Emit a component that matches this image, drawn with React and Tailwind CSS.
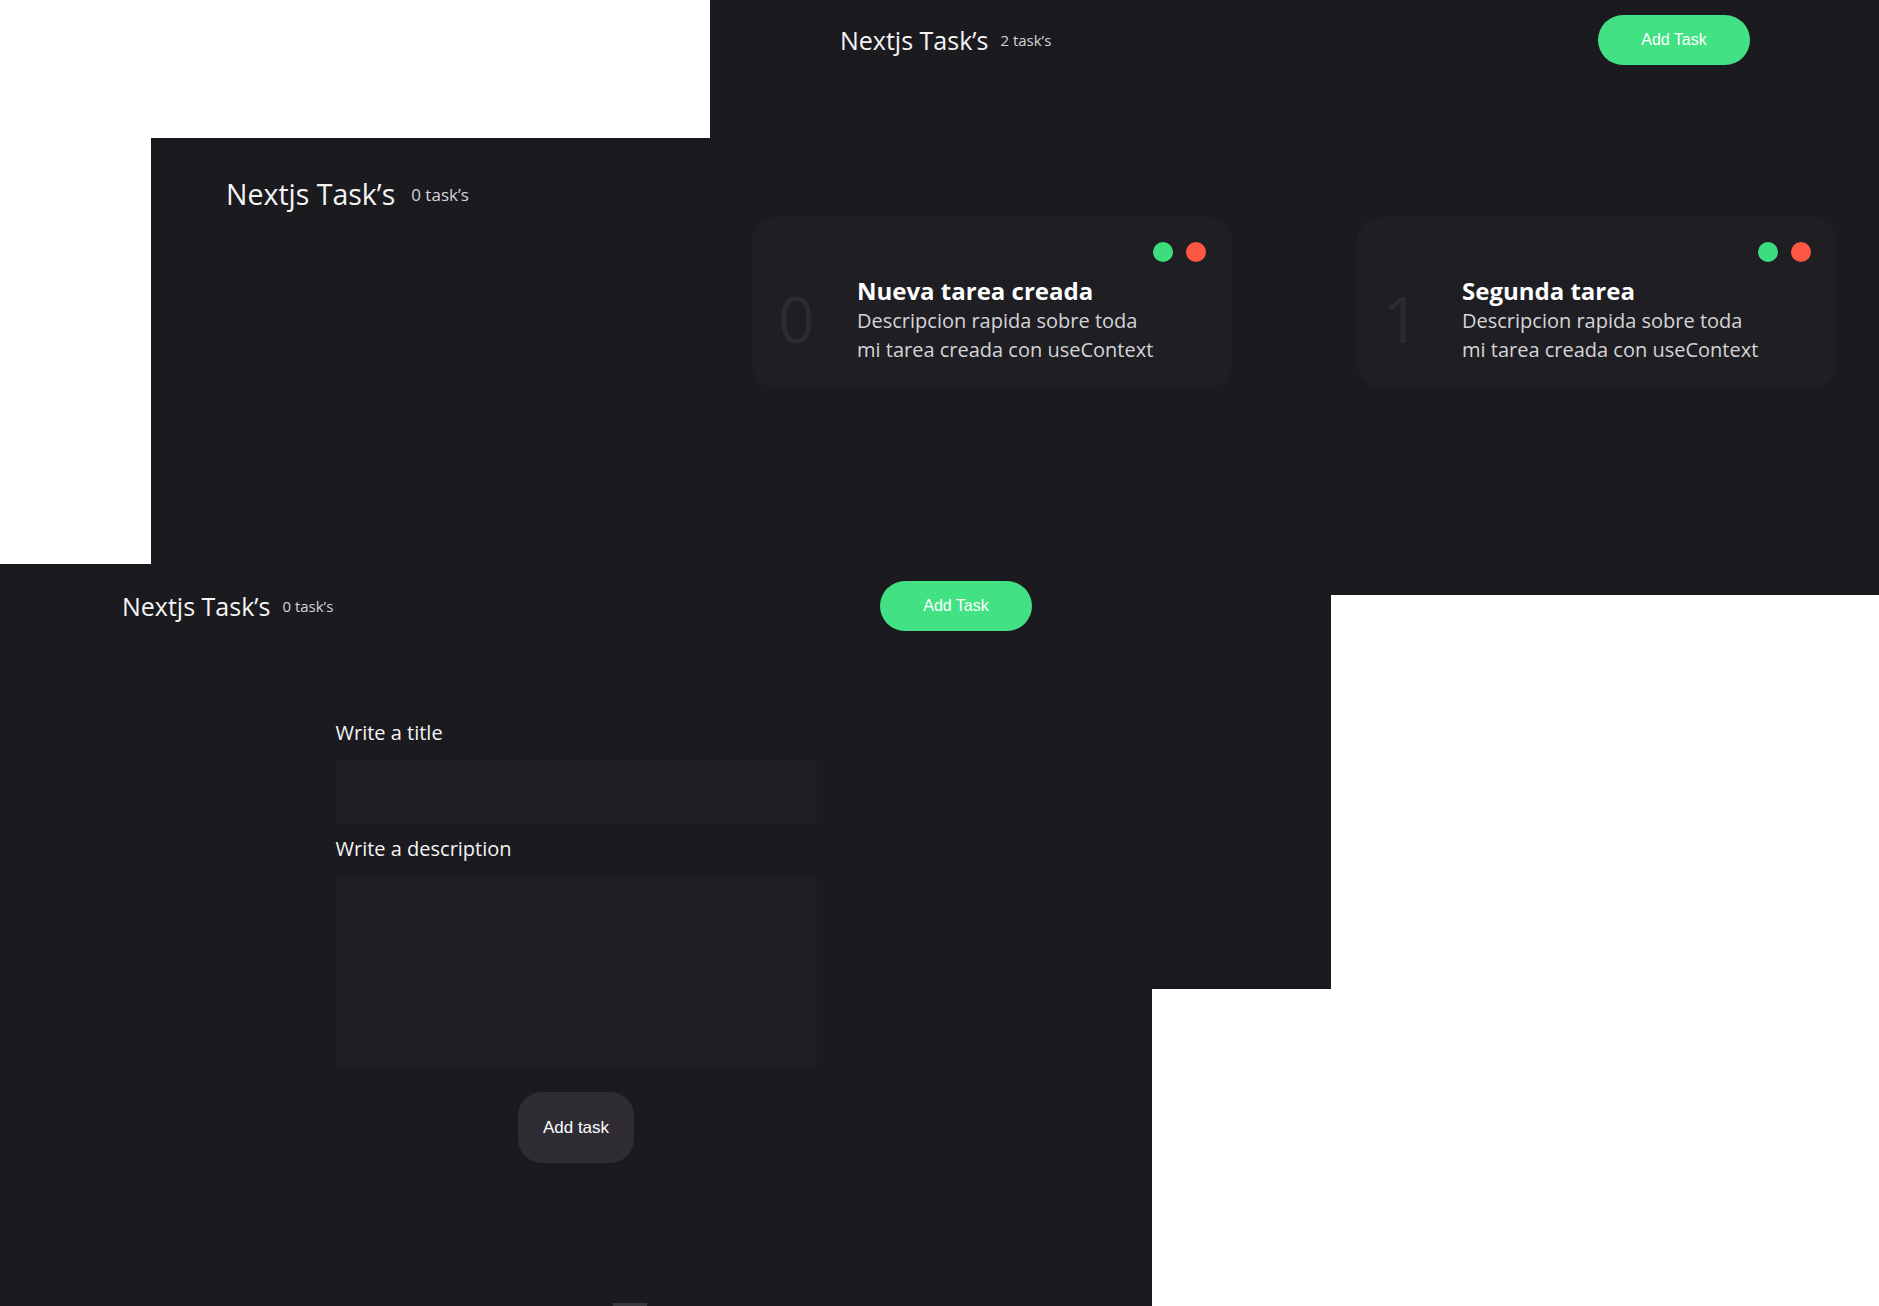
const TASKS = [
  { id: 0, title: "Nueva tarea creada" },
  { id: 1, title: "Segunda tarea" },
];

const sans = { fontFamily: '"Open Sans", "Noto Sans", sans-serif' };

function Header({ count, big, showButton, className }) {
  return (
    <header className={`flex items-center justify-between ${className}`}>
      <div className={`flex items-center ${big ? "gap-4" : "gap-3"}`} style={sans}>
        <h1 className={`${big ? "text-[28.5px]" : "text-[25px]"} text-[#f4f4f5] font-normal leading-none`}>
          Nextjs Task’s
        </h1>
        <span className={`${big ? "text-[17px]" : "text-[15px]"} text-[#d4d4d8] leading-none`}>
          {count} task’s
        </span>
      </div>
      {showButton && (
        <button className="w-[152px] h-[50px] rounded-full bg-[#41e184] text-white text-[16px] font-['Liberation_Sans',Arial,sans-serif]">
          Add Task
        </button>
      )}
    </header>
  );
}

function TaskCard({ task }) {
  return (
    <div className="w-[480px] h-[171px] rounded-[24px] bg-[#1f1e23] px-[26px] pt-[25px]" style={sans}>
      <div className="flex justify-end gap-[13px]">
        <span className="w-5 h-5 rounded-full bg-[#3ddc7e]" />
        <span className="w-5 h-5 rounded-full bg-[#fd5643]" />
      </div>
      <div className="flex items-start mt-[14px]">
        <span className="w-[79px] mt-[11px] text-[64px] leading-none text-[#2c2b30]">{task.id}</span>
        <div>
          <h3 className="text-[24px] leading-[30px] font-bold text-white">{task.title}</h3>
          <p className="text-[20px] leading-[29px] text-[#d4d4d8]">
            Descripcion rapida sobre toda
            <br />
            mi tarea creada con useContext
          </p>
        </div>
      </div>
    </div>
  );
}

export default function App() {
  return (
    <div className="relative w-[1879px] h-[1306px] bg-white overflow-hidden">
      {/* window behind: empty list */}
      <section className="absolute left-[151px] top-[138px] w-[1180px] h-[851px] bg-[#1b1a1f]">
        <Header count={0} big className="h-[112px] pl-[75px]" />
      </section>

      {/* window top right: two tasks */}
      <section className="absolute left-[710px] top-0 w-[1169px] h-[595px] bg-[#1b1a1f]">
        <Header count={2} showButton className="h-[80px] pl-[130px] pr-[129px]" />
        <div className="flex justify-between px-[42px] mt-[137px]">
          {TASKS.map((t) => (
            <TaskCard key={t.id} task={t} />
          ))}
        </div>
      </section>

      {/* window bottom left: new task form */}
      <section className="absolute left-0 top-[564px] w-[1152px] h-[742px] bg-[#1b1a1f]">
        <Header count={0} showButton className="h-[84px] pl-[122px] pr-[120px]" />
        <form className="w-[481px] mx-auto mt-[71px] flex flex-col" style={sans} onSubmit={(e) => e.preventDefault()}>
          <label className="text-[20px] leading-[28px] text-[#f4f4f5]">Write a title</label>
          <input className="mt-[14px] h-[62px] bg-[#1f1e23] outline-none text-white px-3" />
          <label className="mt-[12px] text-[20px] leading-[28px] text-[#f4f4f5]">Write a description</label>
          <textarea className="mt-[14px] h-[189px] bg-[#1f1e23] outline-none text-white p-3 resize-none" />
          <div className="flex justify-center mt-[26px]">
            <button className="w-[116px] h-[71px] rounded-[24px] bg-[#2f2d33] text-white text-[17px] font-['Liberation_Sans',Arial,sans-serif]">
              Add task
            </button>
          </div>
        </form>
        <span className="absolute left-[613px] bottom-0 w-[34px] h-[3px] bg-[#3a393e]" />
      </section>
    </div>
  );
}
